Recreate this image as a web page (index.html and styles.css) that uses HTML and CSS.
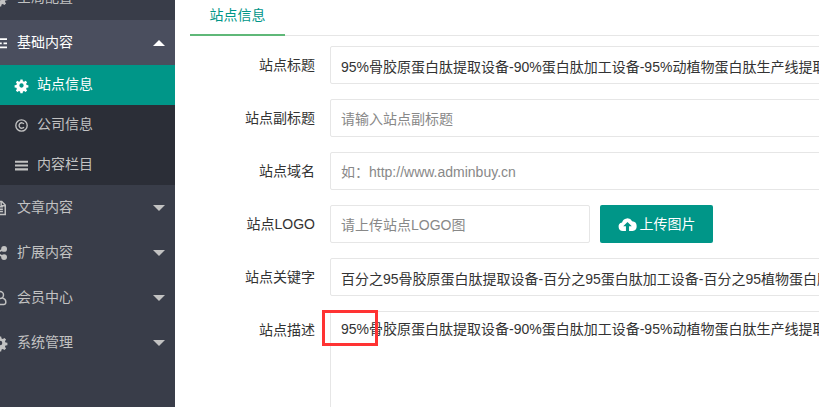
FILE: index.html
```html
<!DOCTYPE html>
<html lang="zh-CN">
<head>
<meta charset="utf-8">
<title>站点信息</title>
<link rel="stylesheet" href="styles.css">
</head>
<body>
<div class="app">
  <aside class="side">
    <div class="nav-item"><svg class="ico" viewBox="0 0 24 24"><path class="fill" d="M10 1h4l.6 3.300 2.200.9 2.800-1.900 2.800 2.800-1.900 2.800.9 2.200 3.300.6v4l-3.300.6-.9 2.200 1.900 2.800-2.800 2.800-2.800-1.900-2.200.9-.6 3.300h-4l-.6-3.300-2.200-.9-2.800 1.900-2.800-2.800 1.900-2.800-.9-2.200-3.300-.6v-4l3.300-.6.9-2.200-1.900-2.800 2.800-2.800 2.800 1.900 2.200-.9zM12 8a4 4 0 1 0 0 8 4 4 0 0 0 0-8z"/></svg><span>全局配置</span></div>
    <div class="nav-item open"><svg class="ico" viewBox="0 0 24 24"><path class="fill" d="M0 4h24v3H0zM0 11h24v3H0zM0 18h24v3H0z"/><path class="fill dark" d="M6 3h3v5H6zM15 10h3v5h-3zM8 17h3v5H8z"/></svg><span>基础内容</span><i class="caret up"></i></div>
    <div class="sub">
      <div class="sub-item on"><svg class="ico-s" viewBox="0 0 24 24"><path class="fill" d="M10 1h4l.6 3.300 2.200.9 2.800-1.900 2.800 2.800-1.900 2.800.9 2.200 3.300.6v4l-3.300.6-.9 2.200 1.900 2.800-2.800 2.800-2.800-1.900-2.200.9-.6 3.300h-4l-.6-3.300-2.200-.9-2.800 1.900-2.800-2.800 1.900-2.800-.9-2.200-3.300-.6v-4l3.300-.6.9-2.200-1.900-2.800 2.800-2.800 2.800 1.900 2.200-.9zM12 8a4 4 0 1 0 0 8 4 4 0 0 0 0-8z"/></svg><span>站点信息</span></div>
      <div class="sub-item"><svg class="ico-s" viewBox="0 0 24 24"><circle class="line" cx="12" cy="12" r="10.500"/><path class="line" d="M16.500 9a5 5 0 1 0 0 6"/></svg><span>公司信息</span></div>
      <div class="sub-item"><svg class="ico-s" viewBox="0 0 24 24"><path class="fill" d="M0 3h24v4H0zM0 10h24v4H0zM0 17h24v4H0z"/></svg><span>内容栏目</span></div>
    </div>
    <div class="nav-item"><svg class="ico" viewBox="0 0 24 24"><path class="line" d="M3 1h12l6 6v16H3z"/><path class="line" d="M7 10h10M7 14h10M7 18h10M14 1v7h7"/></svg><span>文章内容</span><i class="caret"></i></div>
    <div class="nav-item"><svg class="ico" viewBox="0 0 24 24"><circle class="fill" cx="5" cy="12" r="5"/><circle class="fill" cx="19" cy="5" r="5"/><circle class="fill" cx="19" cy="19" r="5"/><path class="line thick" d="M5 12 19 5M5 12l14 7"/></svg><span>扩展内容</span><i class="caret"></i></div>
    <div class="nav-item"><svg class="ico" viewBox="0 0 24 24"><circle class="line" cx="12" cy="7" r="6"/><path class="line" d="M8 12c-4 1-6 4-6 7 0 2.500 1 4 3 4h14c2 0 3-1.500 3-4 0-3-2-6-6-7"/></svg><span>会员中心</span><i class="caret"></i></div>
    <div class="nav-item"><svg class="ico" viewBox="0 0 24 24"><path class="fill" d="M10 1h4l.6 3.300 2.200.9 2.800-1.900 2.800 2.800-1.900 2.800.9 2.200 3.300.6v4l-3.300.6-.9 2.200 1.900 2.800-2.800 2.800-2.800-1.900-2.200.9-.6 3.300h-4l-.6-3.300-2.200-.9-2.800 1.900-2.800-2.800 1.900-2.800-.9-2.200-3.300-.6v-4l3.300-.6.9-2.200-1.900-2.800 2.800-2.800 2.800 1.900 2.200-.9zM12 8a4 4 0 1 0 0 8 4 4 0 0 0 0-8z"/></svg><span>系统管理</span><i class="caret"></i></div>
  </aside>
  <main class="main">
    <div class="tabs"><div class="tab">站点信息</div></div>
    <form class="form">
      <div class="row"><label class="lab">站点标题</label><input class="inp" value="95%骨胶原蛋白肽提取设备-90%蛋白肽加工设备-95%动植物蛋白肽生产线提取设备厂家"></div>
      <div class="row"><label class="lab">站点副标题</label><input class="inp" placeholder="请输入站点副标题"></div>
      <div class="row"><label class="lab">站点域名</label><input class="inp" placeholder="如：http://www.adminbuy.cn"></div>
      <div class="row"><label class="lab">站点LOGO</label><input class="inp short" placeholder="请上传站点LOGO图"><button type="button" class="btn"><svg class="cloud" viewBox="0 0 24 18"><path d="M6 18a5.500 5.500 0 0 1-1-10.900A7 7 0 0 1 18 5.500a6.300 6.300 0 0 1 .5 12.500h-4.500v-6h3.500L12 6.500 6.500 12H10v6z"/></svg><span>上传图片</span></button></div>
      <div class="row"><label class="lab">站点关键字</label><input class="inp" value="百分之95骨胶原蛋白肽提取设备-百分之95蛋白肽加工设备-百分之95植物蛋白肽生产线提取设备厂家"></div>
      <div class="row"><label class="lab">站点描述</label><div class="area-wrap"><textarea class="inp area">95%骨胶原蛋白肽提取设备-90%蛋白肽加工设备-95%动植物蛋白肽生产线提取设备厂家</textarea><div class="mark"></div></div></div>
    </form>
  </main>
</div>
</body>
</html>
```
FILE: styles.css
```css
* { box-sizing: border-box; }
html, body { margin: 0; height: 100%; overflow: hidden; background: #fff; }
body { font: 14px/1.4 "Liberation Sans", "Noto Sans CJK SC", sans-serif; color: #333; }
.app { display: flex; height: 407px; width: 819px; overflow: hidden; }
.side { width: 175px; flex: none; background: #393d49; color: #c2c2c2; overflow: hidden; }
.nav-item { display: flex; align-items: center; height: 45px; padding-right: 10px; margin-left: -7px; position: relative; }
.nav-item:first-child { margin-top: -25px; }
.nav-item span { margin-left: 10px; }
.ico { width: 14px; height: 14px; flex: none; color: #c2c2c2; overflow: visible; }
.ico-s { width: 13px; height: 13px; flex: none; margin-right: 9px; color: #c2c2c2; overflow: visible; }
.fill { fill: currentColor; fill-rule: evenodd; }
.dark { fill: #4a4e5e; }
.line { fill: none; stroke: currentColor; stroke-width: 2.500; }
.thick { stroke-width: 3; }
.nav-item.open { background: #4a4e5e; color: #fff; margin-left: 0; padding-left: 0; }
.nav-item.open .ico { color: #fff; margin-left: -7px; }
.nav-item.open .caret { margin-right: 0; }
.caret { width: 0; height: 0; border-left: 6px solid transparent; border-right: 6px solid transparent; border-top: 6px solid #c2c2c2; margin-left: auto; }
.caret.up { border-top: 0; border-bottom: 6px solid #fff; }
.sub { background: #2b2e37; }
.sub-item { display: flex; align-items: center; height: 40px; padding-left: 15px; }
.sub-item.on { background: #009688; color: #fff; }
.sub-item.on .ico-s { color: #fff; }
.main { flex: 1; min-width: 0; overflow: hidden; padding-left: 15px; }
.tabs { height: 36px; border-bottom: 1px solid #e6e6e6; }
.tab { width: 95px; height: 36px; line-height: 30px; text-align: center; color: #009688; border-bottom: 2px solid #5fb878; }
.form { margin-top: 10px; width: 900px; }
.row { display: flex; align-items: flex-start; margin-bottom: 15px; }
.lab { width: 125px; flex: none; text-align: right; line-height: 38px; margin-right: 15px; color: #333; }
.inp { display: block; flex: 1; min-width: 0; height: 38px; padding: 1px 10px 0; border: 1px solid #e6e6e6; border-radius: 2px; font: inherit; color: #333; background: #fff; outline: 0; }
.inp::placeholder { color: #888; }
.inp.short { flex: none; width: 260px; }
.area-wrap { flex: 1; position: relative; }
.area { width: 100%; height: 200px; padding: 7px 10px; resize: none; line-height: 20px; overflow: hidden; }
.mark { position: absolute; left: -8px; top: -1px; width: 56px; height: 36px; border: 3px solid #f33; }
.btn { width: 113px; height: 38px; margin-left: 10px; flex: none; display: flex; align-items: center; justify-content: center; gap: 3px; background: #009688; color: #fff; border: 0; border-radius: 2px; font: inherit; padding: 0; }
.btn span { position: relative; top: 1px; }
.cloud { width: 19px; height: 14px; fill: #fff; }
```
